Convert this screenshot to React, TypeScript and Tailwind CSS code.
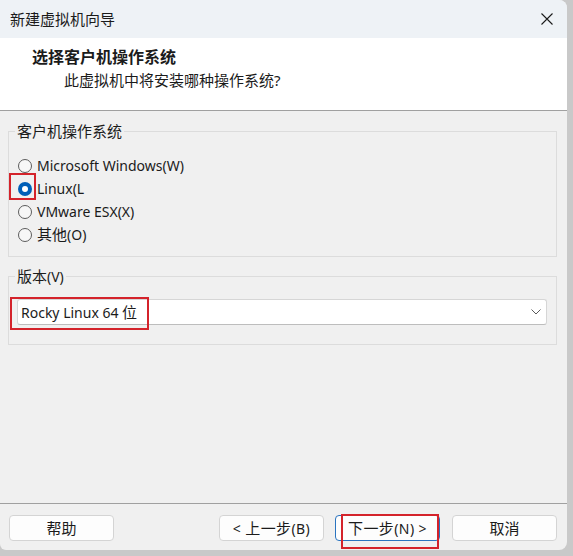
import React from 'react';

const font = { fontFamily: '"Noto Sans", "Noto Sans CJK SC", sans-serif' };

// CJK glyphs sit a bit larger than the Latin ones in the dialog font
function C({ children }: { children: React.ReactNode }) {
  return <span className="text-[15px]">{children}</span>;
}

function Radio({ checked, label }: { checked?: boolean; label: React.ReactNode }) {
  return (
    <div className="flex h-[23px] items-center gap-[5px] pl-[1px]">
      {checked ? (
        <span className="flex h-[14px] w-[14px] items-center justify-center rounded-full bg-[#005fb8]">
          <span className="h-[6px] w-[6px] rounded-full bg-white" />
        </span>
      ) : (
        <span className="h-[14px] w-[14px] rounded-full border border-[#5c5c5c] bg-[#f7f7f7]" />
      )}
      <span className="text-[14px] leading-[20px] text-[#1b1b1b]">{label}</span>
    </div>
  );
}

function Btn({ children, primary }: { children: React.ReactNode; primary?: boolean }) {
  return (
    <button
      className={
        'flex h-[26px] w-[105px] items-center justify-center rounded-[4px] bg-[#fdfdfd] text-[14px] leading-[20px] text-[#1b1b1b] ' +
        (primary ? 'border border-[#2a74c0]' : 'border border-[#d4d4d4]')
      }
    >
      {children}
    </button>
  );
}

export default function App() {
  return (
    <div className="flex h-[556px] w-[573px] bg-[#c9c9c9]" style={font}>
      <div className="relative flex h-[550px] w-[567px] flex-col overflow-hidden rounded-tr-[8px] rounded-br-[8px] rounded-bl-[6px] bg-[#f0f0f0]">
        {/* title bar */}
        <div className="flex h-[38px] items-center justify-between bg-[#eef2f6] pl-[10px] pr-[14px]">
          <span className="text-[15px] leading-[20px] text-[#1b1b1b]">新建虚拟机向导</span>
          <svg width="12" height="12" viewBox="0 0 12 12" className="text-[#1b1b1b]">
            <path d="M0.5 0.5 L11.5 11.5 M11.5 0.5 L0.5 11.5" stroke="currentColor" strokeWidth="1.1" fill="none" />
          </svg>
        </div>

        {/* header */}
        <div className="flex h-[73px] flex-col border-b border-[#a0a0a0] bg-white pt-[8px]">
          <div className="pl-[32px] text-[16px] font-bold leading-[22px] text-[#1b1b1b]">选择客户机操作系统</div>
          <div className="mt-[2px] pl-[64px] text-[15px] leading-[20px] text-[#1b1b1b]">此虚拟机中将安装哪种操作系统?</div>
        </div>

        {/* body */}
        <div className="flex flex-1 flex-col px-[8px] pt-[10px] pr-[10px]">
          <fieldset className="border border-[#dcdcdc] px-[8px] pb-[10px]">
            <legend className="-ml-[2px] px-[2px] text-[15px] leading-[20px] text-[#1b1b1b]">客户机操作系统</legend>
            <div className="mt-[13px] flex flex-col">
              <Radio label="Microsoft Windows(W)" />
              <Radio label="Linux(L" checked />
              <Radio label="VMware ESX(X)" />
              <Radio label={<><C>其他</C>(O)</>} />
            </div>
          </fieldset>

          <fieldset className="mt-[9px] border border-[#dcdcdc] pl-[8px] pr-[9px] pb-[19px]">
            <legend className="-ml-[2px] px-[2px] text-[14px] leading-[20px] text-[#1b1b1b]">
              <C>版本</C>(V)
            </legend>
            <div className="mt-[12px] flex h-[26px] items-center justify-between rounded-[3px] border border-[#d6d6d6] border-b-[#bdbdbd] bg-white pl-[3px] pr-[5px]">
              <span className="text-[14px] leading-[20px] text-[#1b1b1b]">
                Rocky Linux 64 <C>位</C>
              </span>
              <svg width="10" height="6" viewBox="0 0 10 6">
                <path d="M0.5 0.5 L5 5 L9.5 0.5" stroke="#5a5a5a" strokeWidth="1" fill="none" />
              </svg>
            </div>
          </fieldset>
        </div>

        {/* footer */}
        <div className="flex h-[47px] items-start border-t border-[#a0a0a0] pt-[11px] pl-[9px] pr-[10px]">
          <Btn>
            <C>帮助</C>
          </Btn>
          <div className="ml-auto flex gap-[11px]">
            <Btn>
              <span className="tracking-[0.4px]">
                &lt; <C>上一步</C>(B)
              </span>
            </Btn>
            <Btn primary>
              <span className="tracking-[0.4px]">
                <C>下一步</C>(N) &gt;
              </span>
            </Btn>
            <div className="ml-[1px]">
              <Btn>
                <C>取消</C>
              </Btn>
            </div>
          </div>
        </div>

        {/* annotation boxes */}
        <div className="absolute left-[9px] top-[173px] h-[27px] w-[27px] border-2 border-[#d4232b]" />
        <div className="absolute left-[10px] top-[297px] h-[33px] w-[139px] border-2 border-[#d4232b]" />
        <div className="absolute left-[341px] top-[514px] h-[35px] w-[98px] border-2 border-[#d4232b]" />
      </div>
    </div>
  );
}
